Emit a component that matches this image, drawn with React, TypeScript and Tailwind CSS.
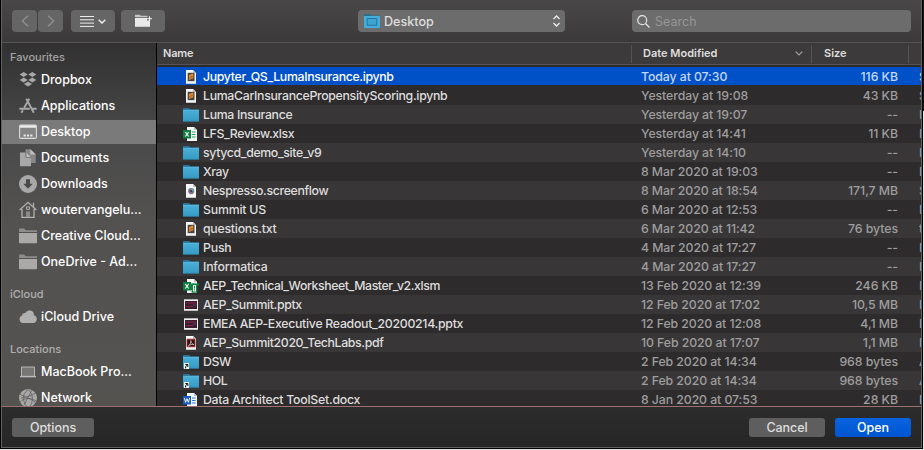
import React from 'react';

type IconName = 'sublime' | 'folder' | 'excel' | 'excelMacro' | 'flow' | 'ppt' | 'pdf' | 'alias' | 'word';

const files: [IconName, string, string, string, string, string][] = [
  ['sublime', 'Jupyter_QS_LumaInsurance.ipynb', 'Today at 07:30', '116 KB', 'S', 'tracking-[-0.33px]'],
  ['sublime', 'LumaCarInsurancePropensityScoring.ipynb', 'Yesterday at 19:08', '43 KB', 'S', 'tracking-[-0.31px]'],
  ['folder', 'Luma Insurance', 'Yesterday at 19:07', '--', 'F', 'tracking-[-0.31px]'],
  ['excel', 'LFS_Review.xlsx', 'Yesterday at 14:41', '11 KB', 'M', 'tracking-[-0.36px]'],
  ['folder', 'sytycd_demo_site_v9', 'Yesterday at 14:10', '--', 'F', 'tracking-[-0.35px]'],
  ['folder', 'Xray', '8 Mar 2020 at 19:03', '--', 'F', 'tracking-[-0.4px]'],
  ['flow', 'Nespresso.screenflow', '8 Mar 2020 at 18:54', '171,7 MB', 'S', 'tracking-[-0.34px]'],
  ['folder', 'Summit US', '6 Mar 2020 at 12:53', '--', 'F', 'tracking-[-0.2px]'],
  ['sublime', 'questions.txt', '6 Mar 2020 at 11:42', '76 bytes', 't', 'tracking-[-0.25px]'],
  ['folder', 'Push', '4 Mar 2020 at 17:27', '--', 'F', 'tracking-[-0.2px]'],
  ['folder', 'Informatica', '4 Mar 2020 at 17:27', '--', 'F', 'tracking-[-0.2px]'],
  ['excelMacro', 'AEP_Technical_Worksheet_Master_v2.xlsm', '13 Feb 2020 at 12:39', '246 KB', 'M', 'tracking-[-0.41px]'],
  ['ppt', 'AEP_Summit.pptx', '12 Feb 2020 at 17:02', '10,5 MB', 'P', 'tracking-[-0.36px]'],
  ['ppt', 'EMEA AEP-Executive Readout_20200214.pptx', '12 Feb 2020 at 12:08', '4,1 MB', 'P', 'tracking-[-0.28px]'],
  ['pdf', 'AEP_Summit2020_TechLabs.pdf', '10 Feb 2020 at 17:07', '1,1 MB', 'P', 'tracking-[-0.36px]'],
  ['alias', 'DSW', '2 Feb 2020 at 14:34', '968 bytes', 'A', 'tracking-[-0.4px]'],
  ['alias', 'HOL', '2 Feb 2020 at 14:34', '968 bytes', 'A', 'tracking-[-0.4px]'],
  ['word', 'Data Architect ToolSet.docx', '8 Jan 2020 at 07:53', '28 KB', 'M', 'tracking-[-0.25px]'],
];

function Folder() {
  return (
    <>
      <path d="M0 1h6l1.5 1.3H16V4H0z" fill="#2a7396" />
      <path d="M0 3h16v11.5H0z" fill="url(#folderFill)" />
      <path d="M0 3.3h16" stroke="#62bfe3" strokeWidth=".6" />
      <path d="M0 14.2h16" stroke="#2b87ad" strokeWidth=".6" />
    </>
  );
}

function Page() {
  return (
    <>
      <path d="M3 1h7l3 3v10.7H3z" fill="#f6f6f6" />
      <path d="M10 1v3h3z" fill="#bdbdbd" />
    </>
  );
}

function FileIcon({ name }: { name: IconName }) {
  return (
    <svg className="size-4 shrink-0" viewBox="0 0 16 16">
      <defs>
        <linearGradient id="folderFill" x1="0" y1="0" x2="0" y2="1">
          <stop offset="0" stopColor="#4bb0d8" />
          <stop offset="1" stopColor="#369bc4" />
        </linearGradient>
      </defs>
      {(name === 'folder' || name === 'alias') && <Folder />}
      {name === 'alias' && (
        <>
          <path d="M1 9h5v6H1z" fill="#f4f4f4" />
          <path d="M2.3 10.5h2.5V13M4.6 10.8 2.6 12.6v1.8" stroke="#111" fill="none" />
        </>
      )}
      {name === 'sublime' && (
        <>
          <Page />
          <path d="M4.7 3.8h6.8v8.4H4.7z" fill="#464646" />
          <path d="m6 6 4.3-1.4v4.6L6 11z" fill="#f28a22" />
          <path d="m7.4 7.3 3 .6M6 8.8l2.8.3" stroke="#464646" strokeWidth=".5" />
        </>
      )}
      {name === 'flow' && (
        <>
          <Page />
          <circle cx="8.2" cy="8.1" r="3.1" fill="#777585" />
          <path d="M8 5.4A2.7 2.7 0 0 1 10.7 8L8 8.1z" fill="#57b5b0" />
          <path d="M5.5 8.1h2.7v2.8z" fill="#a45fa6" />
          <circle cx="8.2" cy="8.1" r="1" fill="#38323f" />
        </>
      )}
      {(name === 'excel' || name === 'excelMacro') && (
        <>
          <path d="M4 1h7l3 3v11H4z" fill="#f5f7f5" />
          <path d="M11 1v3h3z" fill="#b8c4bb" />
          <path d="M9 6h3.6M9 8.5h3.6M9 11h3.6" stroke="#21a366" strokeWidth="1.2" />
          <path d="M0 4h8v8.5H0z" fill="#107c41" />
          <path d="m2.3 6 3.4 4.5m0-4.5-3.4 4.5" stroke="#fff" strokeWidth="1.1" />
        </>
      )}
      {name === 'excelMacro' && (
        <>
          <path d="M8 5.5h8v2h-1.7v7.3H8.6V12H8z" fill="#128347" />
          <path d="M10 7h3v6.5h-3z" fill="#e9f5ed" />
          <path d="M11.5 8v2.5m0 .8v1.1" stroke="#128347" strokeWidth="1" />
        </>
      )}
      {name === 'ppt' && (
        <>
          <path d="M1 2.3h14v11.5H1z" fill="#eeeaec" />
          <path d="M2 4h12v8H2z" fill="#3b1d32" />
          <path d="M3 6h10M3 9.5h7" stroke="#8b2444" strokeWidth="1" />
          <path d="M10 8h3" stroke="#643e6d" />
        </>
      )}
      {name === 'pdf' && (
        <>
          <Page />
          <path d="M4 4.2h8v7.6H4z" fill="#2b1516" stroke="#bd2e2e" strokeWidth=".9" />
          <path d="M5.3 10.9C7 9.6 8.7 6.9 7.9 5.6c-1 .3 1 3.7 3 4-1.6-.6-4 .1-5.6 1.3z" stroke="#f0dddd" strokeWidth=".7" fill="none" />
        </>
      )}
      {name === 'word' && (
        <>
          <path d="M4 1h7l3 3v11H4z" fill="#f6f8fc" />
          <path d="M11 1v3h3z" fill="#b7c4d6" />
          <path d="M9 6h3.7M9 8.5h3.7M9 11h3.7" stroke="#2b7cd3" strokeWidth="1.1" />
          <path d="M0 4h8v8.5H0z" fill="#185abd" />
          <path d="m1.4 6 1.2 4.3L4 6.7l1.4 3.6L6.6 6" stroke="#fff" strokeWidth=".9" fill="none" />
        </>
      )}
    </svg>
  );
}

function SideIcon({ name }: { name: string }) {
  return (
    <svg className="size-[18px] shrink-0" viewBox="0 0 18 18" fill="#a9a8a8">
      {name === 'dropbox' && (
        <path d="m4.7 1 4 2.5-4 2.5-4-2.5zM13.3 1l4 2.5-4 2.5-4-2.5zM4.7 6.6l4 2.5-4 2.5-4-2.5zM13.3 6.6l4 2.5-4 2.5-4-2.5zM4.9 12.9 9 10.4l4.1 2.5L9 15.6z" />
      )}
      {name === 'apps' && (
        <path d="M7.3 1.8 14.8 15.8M10.3 1.8 5.2 10.8M3.8 13.3l-1.4 2.5M.4 11.8h10.4M13.3 11.8h4.3" stroke="#a9a8a8" strokeWidth="1.9" fill="none" />
      )}
      {name === 'desktop' && (
        <>
          <rect x=".6" y="2.1" width="16.8" height="13.3" rx="1.3" fill="#858585" stroke="#ddd" strokeWidth="1.1" />
          <path d="M1 2.5h16v2.2H1z" fill="#ededed" />
          <path d="M4.6 11.6h2.2v2H4.6zm3.3 0h2.2v2H7.9zm3.3 0h2.2v2h-2.2z" fill="#e8e8e8" />
        </>
      )}
      {name === 'documents' && (
        <>
          <path d="M6.5.3h5.2l5 5V14H12V8L8.2 4.3H6.5z" fill="#888" />
          <path d="M11.4.5 16.7 5.6h-5.3z" fill="#c0c0c0" />
          <path d="M1 3.5h5.6v5.1H12v8.6H1z" />
          <path d="m7.3 3.6 4.6 4.3H7.3z" fill="#c2c2c2" />
        </>
      )}
      {name === 'downloads' && (
        <>
          <circle cx="9" cy="9" r="9" />
          <path d="M7 4.2h4v4.6h2.7L9 13.7 4.3 8.8H7z" fill="#4a4949" />
        </>
      )}
      {name === 'home' && (
        <>
          <path d="M.6 9 9 1.3 17.4 9M3 8v8.3h12V8M14.5 6V1.8" fill="none" stroke="#b2b1b1" strokeWidth="1.3" />
          <path d="M7.6 5.8h2.8v2.6H7.6z" fill="none" stroke="#b2b1b1" />
          <path d="M7 10.5h4v5.6H7z" fill="#8b8a89" />
        </>
      )}
      {name === 'folder' && (
        <>
          <path d="M0 2.3Q0 1.6.8 1.6h4.5l1.5 1.7h11.2V5H0z" fill="#8e8d8d" />
          <path d="M0 6h18v9.5q0 .7-.7.7H.7q-.7 0-.7-.7z" fill="#aaa9a8" />
        </>
      )}
      {name === 'cloud' && (
        <path d="M4 15a3.9 3.9 0 0 1-1-7.5A2.7 2.7 0 0 1 6.2 5a4.6 4.6 0 0 1 8.7 2.2A4 4 0 0 1 14.2 15z" fill="#b1b0b0" />
      )}
      {name === 'laptop' && (
        <>
          <path d="M2.5 4h13v9.3h-13z" fill="#777674" stroke="#b8b7b7" />
          <path d="M1 13.7h16" stroke="#c0bfbf" strokeWidth="1.2" />
        </>
      )}
      {name === 'network' && (
        <>
          <circle cx="9" cy="9" r="9" />
          <path d="M1 5c5 4 10 3 15-1M1 13c5-5 11-4 16-1M9 .5C2 6 4 13 8 17.5M9 .5c6 5 5 12 2 17M2 9c7-1 10 1 14 4M13 1 5 16" fill="none" stroke="#62615f" strokeWidth=".8" />
        </>
      )}
    </svg>
  );
}

function SideItem({ icon, label, selected }: { icon: string; label: string; selected?: boolean }) {
  return (
    <div className={`flex h-[26px] shrink-0 items-center ${selected ? 'bg-[linear-gradient(#7a7a7a,#7a7a7a)] bg-[length:100%_24px] bg-center bg-no-repeat' : ''}`}>
      <div className="flex items-center gap-1 pl-[17px] text-[12.5px] font-medium text-white">
        <SideIcon name={icon} />
        <span className="whitespace-nowrap leading-4">{label}</span>
      </div>
    </div>
  );
}

function SideHeading({ children }: { children: string }) {
  return <div className="mt-[11px] h-[18px] shrink-0 pl-2 text-[11px] font-medium text-[#b0afaf]">{children}</div>;
}

const toolButton = 'flex h-[22px] items-center justify-center rounded bg-[#666565]';

export default function App() {
  return (
    <div className="flex h-[450px] w-[924px] overflow-hidden bg-[linear-gradient(#161616_0_111px,#e4e4e4_111px)] font-['Inter','Liberation_Sans',sans-serif] text-[12.3px] leading-4 font-medium text-[#dfdede]">
      <div className="flex h-[449px] w-[923px] flex-col border-r border-b border-l border-black bg-[#2b2a2a]">
        <div className="flex h-[448px] flex-col border-r border-b border-l border-[#626161]">
          <div className="flex h-[43px] shrink-0 items-start border-b border-[#555354] bg-linear-to-b from-[#494748] to-[#3b393a] pt-[10px] pl-[10px]">
            <div className="flex gap-px">
              <div className={`${toolButton} w-[25px]`}>
                <svg className="h-3 w-2" viewBox="0 0 8 12" fill="none" stroke="#908f8f" strokeWidth="1.4"><path d="M7 .7 1.3 6 7 11.3" /></svg>
              </div>
              <div className={`${toolButton} w-[25px]`}>
                <svg className="h-3 w-2" viewBox="0 0 8 12" fill="none" stroke="#908f8f" strokeWidth="1.4"><path d="m1 .7 5.7 5.3L1 11.3" /></svg>
              </div>
            </div>
            <div className={`${toolButton} ml-2 w-11 gap-1`}>
              <svg className="h-[11px] w-[14px]" viewBox="0 0 14 11" stroke="#eee"><path d="M0 .5h14M0 3.8h14M0 7.1h14M0 10.4h14" /></svg>
              <svg className="h-[5px] w-2" viewBox="0 0 8 5" fill="none" stroke="#eee" strokeWidth="1.5"><path d="m.7.7 3.3 3.3L7.3.7" /></svg>
            </div>
            <div className={`${toolButton} ml-[6px] w-11`}>
              <svg className="-mt-0.5 h-[13px] w-[18px]" viewBox="0 0 18 13" fill="#e9e9e9">
                <path d="M1 .8h4.5L7 1.8h6.5v1.4H1z" fill="#c4c4c4" />
                <path d="M1 4h12v2.5h3V12.700H1z" />
                <path d="M15.500 2.200v5M13 4.700h5" stroke="#f4f4f4" strokeWidth="1.100" />
              </svg>
            </div>
            <div className="ml-[193px] flex h-[22px] w-[207px] items-center rounded bg-[#6d6c6c] pr-[5px] pl-[6px]">
              <svg className="size-4" viewBox="0 0 16 16">
                <path d="M0 1h6l1.400 1.500H16V4H0z" fill="#286f8b" />
                <path d="M0 3h16v12H0z" fill="#43addb" />
                <path d="M3.200 5.500h9.600v6.800H3.200z" fill="#3da3cf" stroke="#23779d" />
              </svg>
              <span className="ml-[4px] flex-1 pt-px text-[12.6px]">Desktop</span>
              <svg className="h-3 w-[7px]" viewBox="0 0 7 12" fill="none" stroke="#eee" strokeWidth="1.3"><path d="m.5 4 3-3 3 3M.5 8l3 3 3-3" /></svg>
            </div>
            <div className="ml-[67px] flex h-[22px] w-[279px] items-center rounded bg-[#6d6c6c] pl-[5px] text-[12.4px] font-normal text-[#979696]">
              <svg className="size-[13px]" viewBox="0 0 13 13" fill="none" stroke="#e5e5e5" strokeWidth="1.2"><circle cx="5.2" cy="5.2" r="4.5" /><path d="m8.5 8.500 4 4" /></svg>
              <span className="ml-[5px] pt-px tracking-[0.1px]">Search</span>
            </div>
          </div>

          <div className="flex h-[363px] shrink-0">
            <div className="flex w-[154px] shrink-0 flex-col overflow-hidden bg-[linear-gradient(#323131,#4a4949_90px,#535251_180px,#545350)] pt-[6px]">
              <div className="h-[18px] shrink-0 pl-2 text-[11px] text-[#a5a4a4]">Favourites</div>
              <SideItem icon="dropbox" label="Dropbox" />
              <SideItem icon="apps" label="Applications" />
              <SideItem icon="desktop" label="Desktop" selected />
              <SideItem icon="documents" label="Documents" />
              <SideItem icon="downloads" label="Downloads" />
              <SideItem icon="home" label="woutervangelu..." />
              <SideItem icon="folder" label="Creative Cloud..." />
              <SideItem icon="folder" label="OneDrive - Ad..." />
              <SideHeading>iCloud</SideHeading>
              <SideItem icon="cloud" label="iCloud Drive" />
              <SideHeading>Locations</SideHeading>
              <SideItem icon="laptop" label="MacBook Pro..." />
              <SideItem icon="network" label="Network" />
            </div>

            <div className="flex min-w-0 flex-1 flex-col overflow-hidden border-l border-black bg-[#2d2b2c]">
              <div className="flex h-[22px] shrink-0 items-center border-b border-[#585455] bg-[#3c3a3b] pl-[6px] text-[11px] font-semibold">
                <span className="w-[468px] shrink-0 pb-0.5 tracking-[-0.2px]">Name</span>
                <div className="flex h-[18px] w-[181px] shrink-0 items-center justify-between border-x border-[#555354] pr-2 pl-[11px]">
                  <span className="pb-0.5">Date Modified</span>
                  <svg className="h-[5px] w-2" viewBox="0 0 8 5" fill="none" stroke="#a3a2a2" strokeWidth="1.2"><path d="m.7.7 3.3 3.3L7.3.7" /></svg>
                </div>
                <div className="flex h-[18px] w-[97px] items-center border-r border-[#555354] pb-0.5 pl-3">Size</div>
              </div>
              <div className="flex flex-col overflow-hidden pt-[2px]">
                {files.map(([icon, name, date, size, kind, tracking], i) => (
                  <div
                    key={name}
                    className={`flex h-[19px] shrink-0 items-center pl-[26px] ${i === 0 ? 'bg-[linear-gradient(#0050c8_18px,#2d2b2c_18px)] text-white' : i % 2 ? 'bg-[#2d2b2c]' : 'bg-[#383637]'}`}
                  >
                    <FileIcon name={icon} />
                    <span className={`ml-1 w-[438px] shrink-0 whitespace-nowrap ${tracking}`}>{name}</span>
                    <span className={`w-[150px] shrink-0 tracking-[-0.08px] whitespace-nowrap ${i ? 'text-[#9f9e9e]' : 'text-[#c4d8f8]'}`}>{date}</span>
                    <span className={`w-[107px] shrink-0 text-right tracking-[-0.05px] whitespace-nowrap ${i ? 'text-[#9f9e9e]' : 'text-[#c4d8f8]'}`}>{size}</span>
                    <span className={`ml-[21px] w-[3px] shrink-0 overflow-hidden ${i ? 'text-[#9f9e9e]' : 'text-[#c4d8f8]'}`}>{kind}</span>
                  </div>
                ))}
              </div>
            </div>
          </div>

          <div className="flex flex-1 items-start border-t border-[#9c706e] bg-linear-to-b from-[#2d2c2c] to-[#262626] pt-[11px] pr-[10px] pl-[10px] text-[12.5px] tracking-[-0.05px]">
            <div className="flex h-[19px] w-[82px] items-center justify-center rounded-[3px] bg-[#5f5e5e]">Options</div>
            <div className="ml-auto flex h-[19px] w-[76px] items-center justify-center rounded-[3px] bg-[#5f5e5e]">Cancel</div>
            <div className="ml-[10px] flex h-[19px] w-[76px] items-center justify-center rounded-[3px] bg-linear-to-b from-[#0a63e0] to-[#0055cf] text-white">Open</div>
          </div>
        </div>
      </div>
    </div>
  );
}
